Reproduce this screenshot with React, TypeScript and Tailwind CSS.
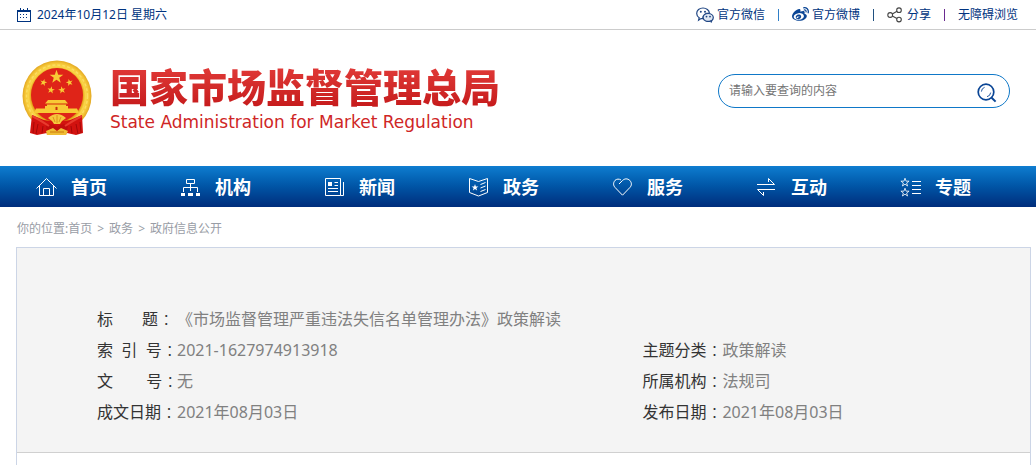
import React from 'react';
import { FaWeibo } from 'react-icons/fa';

const STAR = 'M0 -10 L2.4 -3.1 L9.5 -3.1 L3.8 1.2 L5.9 8.1 L0 3.9 L-5.9 8.1 L-3.8 1.2 L-9.5 -3.1 L-2.4 -3.1 Z';

const CalendarIcon = () => (
  <svg width="14" height="14" viewBox="0 0 14 14" fill="none" stroke="#003380" shapeRendering="crispEdges">
    <path d="M0.5 2.5H13.5V13.5H0.5Z" />
    <path d="M0.5 2.5H13.5M1 3.5H13M3.5 0V3M6.5 1V3M10.5 0V3" />
    <path d="M3 6.5H5M6 6.5H8M9 6.5H11M3 9.5H5M6 9.5H8M9 9.5H11" strokeDasharray="1 1" />
  </svg>
);

const WechatIcon = () => (
  <svg width="18" height="16" viewBox="0 0 18 16" fill="none" stroke="#1f4583" strokeWidth="1.2">
    <path d="M2.6 13.2L3.2 10.7C1.6 9.6 0.7 8.1 0.7 6.4C0.7 3.4 3.5 1 7 1C10.4 1 13.2 3.2 13.4 6.1C9.7 5.9 6.6 8 6.8 11.6C6.2 11.8 5.6 11.7 5 11.6Z" />
    <path d="M15.2 14.9L14.8 13.9C11.4 15.3 7.1 13.8 7.1 10.6C7.1 8.3 9.4 6.5 12.2 6.5C15 6.5 17.3 8.3 17.3 10.6C17.3 11.8 16.8 12.8 15.9 13.5Z" fill="#dfe7f2" />
    <g fill="#1f4583" stroke="none">
      <circle cx="4.8" cy="4.8" r="1" />
      <circle cx="9" cy="4.8" r="1" />
      <circle cx="10.5" cy="9.6" r="0.9" />
      <circle cx="14" cy="9.6" r="0.9" />
    </g>
  </svg>
);

const ShareIcon = () => (
  <svg width="16" height="16" viewBox="0 0 16 16" fill="none" stroke="#444" strokeWidth="1.1">
    <circle cx="3.2" cy="8" r="2.4" />
    <circle cx="12" cy="3.2" r="2.3" />
    <circle cx="12" cy="12.6" r="2.3" />
    <path d="M5.3 6.9L10 4.3M5.3 9.1L10 11.6" />
  </svg>
);

const SearchIcon = () => (
  <svg width="20" height="20" viewBox="0 0 20 20" fill="none" stroke="#0a4595">
    <circle cx="9" cy="9" r="7.8" strokeWidth="1.7" />
    <path d="M14.6 14.8L18.6 18.6" strokeWidth="2" />
    <path d="M4.4 8.6A4.8 4.8 0 0 1 7.6 4.3M13.7 9.6A4.8 4.8 0 0 1 10 13.7" strokeWidth="0.9" />
  </svg>
);

const Emblem = () => (
  <svg width="70" height="76" viewBox="0 0 70 76" role="img" aria-label="国徽">
    <defs>
      <radialGradient id="gold">
        <stop offset="0.74" stopColor="#e09a10" />
        <stop offset="0.82" stopColor="#fad548" />
        <stop offset="0.92" stopColor="#f5c637" />
        <stop offset="1" stopColor="#e2a722" />
      </radialGradient>
    </defs>
    <ellipse cx="35" cy="36" rx="34.5" ry="35.5" fill="url(#gold)" />
    <ellipse cx="35" cy="36" rx="30.5" ry="31" fill="none" stroke="#ffe778" strokeWidth="1.5" strokeDasharray="3 2" opacity="0.6" />
    <ellipse cx="35" cy="35" rx="26" ry="27" fill="#df2418" />
    <g fill="#f8ca35">
      <path d={STAR} transform="translate(34.5 17) scale(.72)" />
      <path d={STAR} transform="translate(21.5 22.5) rotate(15) scale(.37)" />
      <path d={STAR} transform="translate(47.5 22.5) rotate(-15) scale(.37)" />
      <path d={STAR} transform="translate(29 30) rotate(10) scale(.39)" />
      <path d={STAR} transform="translate(40 30) rotate(-10) scale(.39)" />
      <path d="M26 40H43L46 43.5H23Z" />
      <path d="M25 44.5H44V46H46V50H23V46H25Z" />
      <path d="M14 48.5H55L57 53H12Z" />
    </g>
    <path d="M24 44H45" stroke="#d88413" strokeWidth="0.6" />
    <path d="M33.5 50V47.5Q34.5 46 35.5 47.5V50Z" fill="#c8300f" />
    <path d="M10 55L22 60L28 61H42L48 60L60 55L61 73L54 75L45 73H25L15 75L8 73Z" fill="#d2120f" />
    <path d="M24 66Q29 62 35 67Q41 62 46 66L44 75H25Z" fill="#c20d0d" />
    <path d="M26 58Q35 50 44 58L40 61L38 64H32L30 61Z" fill="#f5c73c" />
    <path d="M31 57L33 62M35 55V63M39 57L37 62" stroke="#d88413" strokeWidth="0.8" />
    <path d="M24 71L31 68L35 71L39 68L46 71L44 75H25Z" fill="#efbd35" />
    <path d="M28 72H42" stroke="#c9780c" strokeWidth="1" />
    <path d="M10 56Q18 60 27 66M60 56Q52 60 43 66" stroke="#e83a2e" strokeWidth="2" fill="none" />
    <path d="M12 62L11 73M16 64L14 74M21 66L20 73M58 62L59 73M54 64L56 74M49 66L50 73" stroke="#a50808" strokeWidth="1" />
  </svg>
);

const HomeIcon = () => (
  <>
    <path d="M0.5 11.5L10.5 1.5L20.5 11.5" />
    <path d="M3.5 9V18.5H17.5V9M7.5 18.5V11.5H13.5V18.5" />
  </>
);

const OrgIcon = () => (
  <>
    <path d="M6.5 2.5H14.5V6.5H6.5ZM10.5 6.5V14M3.5 15V10.5H17.5V15" />
    <path d="M1 17.5H5M8 17.5H13M16 17.5H20" strokeWidth="3" />
  </>
);

const NewsIcon = () => (
  <>
    <path d="M1.5 1.5H16.5V18.5H1.5ZM19.5 5V18.5H16.5M16.5 4.5H17" />
    <path d="M10.5 5.5H14M10.5 8.5H14M4 11.5H14M4 14.5H14" />
    <path d="M4 5H8V9H4Z" fill="white" stroke="none" />
  </>
);

const AffairsIcon = () => (
  <>
    <path d="M1.5 1.5L10.5 4.5L19.5 1.5V15.5L10.5 19L1.5 15.5Z" />
    <path d="M12.5 7.5L17.5 5.5M12.5 11L17.5 9M12.5 14.5L17.5 12.5" />
    <path d={STAR} transform="translate(7 10.5) scale(.36)" fill="white" stroke="none" />
  </>
);

const ServiceIcon = () => (
  <path d="M7 7L10.5 3.5C12.5 1.5 15.5 1.2 17.8 3.4C20 5.8 19.8 8.6 17.8 10.6L10.5 18.2L3.2 10.6C1.2 8.6 1 5.8 3 3.4C4.8 1.8 7 1.7 9 3" />
);

const InteractIcon = () => <path d="M1 7.5H18.5L12.5 1.5V5M19 12.5H1.5L7.5 18.5V15" />;

const TopicIcon = () => (
  <>
    <path d={STAR} transform="translate(5 5.5) scale(.43)" strokeWidth="1.9" />
    <path d={STAR} transform="translate(5 15.5) scale(.43)" strokeWidth="1.9" />
    <path d="M12 4.5H21M12 8.5H21M12 12.5H21M12 16.5H21" />
  </>
);

const navItems = [
  { name: '首页', icon: <HomeIcon /> },
  { name: '机构', icon: <OrgIcon /> },
  { name: '新闻', icon: <NewsIcon /> },
  { name: '政务', icon: <AffairsIcon /> },
  { name: '服务', icon: <ServiceIcon /> },
  { name: '互动', icon: <InteractIcon /> },
  { name: '专题', icon: <TopicIcon /> },
];

const Field = ({ label, value, wide = false }: { label: string; value: string; wide?: boolean }) => (
  <div className={`flex h-[31px] leading-[31px] ${wide ? 'col-span-2' : ''}`}>
    <dt className="flex w-20 shrink-0 whitespace-pre text-[#333]">
      {label}
      <span className="font-['Noto_Sans_CJK_TC',sans-serif] font-light">：</span>
    </dt>
    <dd className="text-[#808080]">{value}</dd>
  </div>
);

const Divider = ({ color }: { color: string }) => <span className={`h-3 w-px ${color}`} />;

const App = () => {
  return (
    <div className="flex min-h-screen flex-col bg-white font-['Noto_Sans','Noto_Sans_CJK_SC',sans-serif] text-xs">
      <div className="flex h-[30px] items-center justify-between border-b border-[#ccc] pr-[18px] pl-[17px] text-[#003380]">
        <div className="flex items-center gap-1.5">
          <CalendarIcon />
          <span>2024年10月12日 星期六</span>
        </div>
        <div className="flex items-center gap-[13px]">
          <a href="#wechat" className="flex items-center gap-[3px]">
            <WechatIcon />
            官方微信
          </a>
          <Divider color="bg-[#2f7fc8]" />
          <a href="#weibo" className="flex items-center gap-[3px]">
            <FaWeibo size={17} color="#0a4595" />
            官方微博
          </a>
          <Divider color="bg-[#205080]" />
          <a href="#share" className="flex items-center gap-1">
            <ShareIcon />
            分享
          </a>
          <Divider color="bg-[#6a2a90]" />
          <a href="#accessible">无障碍浏览</a>
        </div>
      </div>

      <header className="flex h-[136px] items-center justify-between pr-[26px] pl-[22px]">
        <a href="#home" className="flex items-center gap-[18px]">
          <Emblem />
          <div>
            <h1 className="bg-linear-to-b from-[#e23b39] to-[#c41719] bg-clip-text text-[39px] leading-[46px] font-black text-transparent">
              国家市场监督管理总局
            </h1>
            <p className="pt-0.5 font-['DejaVu_Sans',sans-serif] text-[17px] leading-5 text-[#cf2626]">
              State Administration for Market Regulation
            </p>
          </div>
        </a>
        <form className="mb-[14px] flex h-[34px] w-[292px] items-center rounded-full border border-[#0f78c8] pr-3 pl-2.5">
          <input
            type="text"
            aria-label="搜索"
            placeholder="请输入要查询的内容"
            className="min-w-0 flex-1 outline-none placeholder:text-[#757575]"
          />
          <button type="button" aria-label="搜索" className="pt-1">
            <SearchIcon />
          </button>
        </form>
      </header>

      <nav className="flex h-[41px] items-center bg-linear-to-b from-[#0f7dd0] to-[#002d7c] pl-4">
        {navItems.map(item => (
          <a key={item.name} href="#nav" className="flex w-36 items-center gap-[13px] pl-5 text-lg font-bold text-white">
            <svg width="22" height="20" viewBox="0 0 22 20" fill="none" stroke="white" strokeWidth="1">
              {item.icon}
            </svg>
            {item.name}
          </a>
        ))}
      </nav>

      <div className="flex h-10 items-center gap-[5px] pt-1 pl-[17px] text-[#999da6]">
        <span>
          你的位置:<a href="#home">首页</a>
        </span>
        <span>&gt;</span>
        <a href="#affairs">政务</a>
        <span>&gt;</span>
        <a href="#info">政府信息公开</a>
      </div>

      <main className="mr-[5px] ml-4 flex-1 border border-b-0 border-[#ccd5e6]">
        <dl className="grid grid-cols-[3fr_2fr] border-b border-[#d0d0d0] bg-[#f4f4f4] pt-14 pr-6 pb-6 pl-20 text-base">
          <Field label={'标       题'} value="《市场监督管理严重违法失信名单管理办法》政策解读" wide />
          <Field label={'索  引  号'} value="2021-1627974913918" />
          <Field label="主题分类" value="政策解读" />
          <Field label={'文        号'} value="无" />
          <Field label="所属机构" value="法规司" />
          <Field label="成文日期" value="2021年08月03日" />
          <Field label="发布日期" value="2021年08月03日" />
        </dl>
      </main>
    </div>
  );
};

export default App;
